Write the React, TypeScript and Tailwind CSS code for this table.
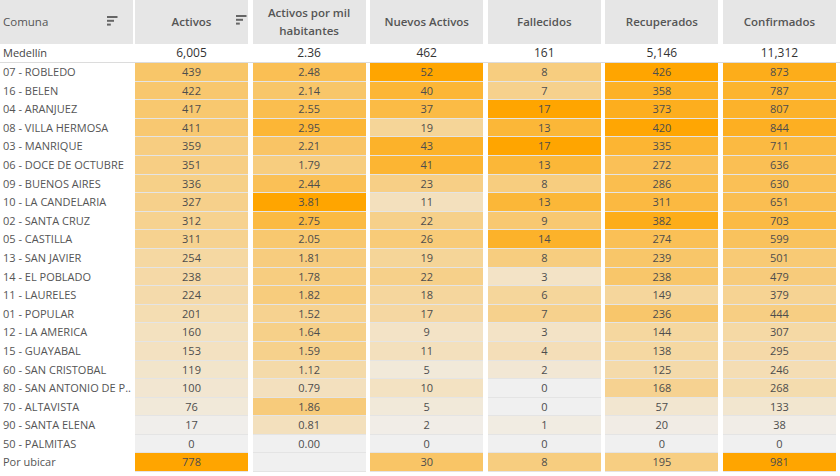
import React from 'react'

type Row = [string, number, number | null, number, number, number, number]

const rows: Row[] = [
  ['07 - ROBLEDO', 439, 2.48, 52, 8, 426, 873],
  ['16 - BELEN', 422, 2.14, 40, 7, 358, 787],
  ['04 - ARANJUEZ', 417, 2.55, 37, 17, 373, 807],
  ['08 - VILLA HERMOSA', 411, 2.95, 19, 13, 420, 844],
  ['03 - MANRIQUE', 359, 2.21, 43, 17, 335, 711],
  ['06 - DOCE DE OCTUBRE', 351, 1.79, 41, 13, 272, 636],
  ['09 - BUENOS AIRES', 336, 2.44, 23, 8, 286, 630],
  ['10 - LA CANDELARIA', 327, 3.81, 11, 13, 311, 651],
  ['02 - SANTA CRUZ', 312, 2.75, 22, 9, 382, 703],
  ['05 - CASTILLA', 311, 2.05, 26, 14, 274, 599],
  ['13 - SAN JAVIER', 254, 1.81, 19, 8, 239, 501],
  ['14 - EL POBLADO', 238, 1.78, 22, 3, 238, 479],
  ['11 - LAURELES', 224, 1.82, 18, 6, 149, 379],
  ['01 - POPULAR', 201, 1.52, 17, 7, 236, 444],
  ['12 - LA AMERICA', 160, 1.64, 9, 3, 144, 307],
  ['15 - GUAYABAL', 153, 1.59, 11, 4, 138, 295],
  ['60 - SAN CRISTOBAL', 119, 1.12, 5, 2, 125, 246],
  ['80 - SAN ANTONIO DE P..', 100, 0.79, 10, 0, 168, 268],
  ['70 - ALTAVISTA', 76, 1.86, 5, 0, 57, 133],
  ['90 - SANTA ELENA', 17, 0.81, 2, 1, 20, 38],
  ['50 - PALMITAS', 0, 0.0, 0, 0, 0, 0],
  ['Por ubicar', 778, null, 30, 8, 195, 981],
]

const totals = ['6,005', '2.36', '462', '161', '5,146', '11,312']

// max per column for the colour scale
const maxes = [1, 2, 3, 4, 5, 6].map((i) =>
  Math.max(...rows.map((r) => (r[i] as number | null) ?? 0))
)

function heat(v: number | null, max: number) {
  if (v == null) return '#f0f0f0'
  const t = Math.min(1, v / max)
  const from = [240, 240, 240]
  const to = [255, 165, 0]
  const c = from.map((f, i) => Math.round(f + (to[i] - f) * t))
  return `rgb(${c[0]}, ${c[1]}, ${c[2]})`
}

function fmt(v: number | null, i: number) {
  if (v == null) return ''
  if (i === 2) return v.toFixed(2)
  return v.toLocaleString('en-US')
}

function cn(...c: (string | false | undefined)[]) {
  return c.filter(Boolean).join(' ')
}

function SortIcon() {
  return (
    <svg width="11" height="10" viewBox="0 0 11 10" className="block">
      <rect x="0" y="0" width="10.5" height="2" fill="#666" />
      <rect x="0" y="3.8" width="7" height="2" fill="#666" />
      <rect x="0" y="7.6" width="3.8" height="2" fill="#666" />
    </svg>
  )
}

// column widths: label 133, gap 2, then six 113px columns with ~4.6px gaps
const labelCol = 'w-[133px] shrink-0'
function valCol(i: number) {
  return cn('w-[113px] shrink-0', i === 1 ? 'ml-[2px]' : 'ml-[4.6px]')
}

export default function App() {
  const headers = ['Activos', 'Activos por mil habitantes', 'Nuevos Activos', 'Fallecidos', 'Recuperados', 'Confirmados']

  return (
    <div className="w-[840px] h-[476px] bg-white overflow-hidden font-['Open_Sans',sans-serif]">
      {/* header */}
      <div className="flex h-[44px]">
        <div className={cn(labelCol, 'relative flex items-center bg-[#e6e6e6] pl-[3px] text-[11.5px] text-[#555]')}>
          Comuna
          <div className="absolute left-[107px] top-[16px]">
            <SortIcon />
          </div>
        </div>
        {headers.map((h, i) => (
          <div
            key={h}
            className={cn(
              valCol(i + 1),
              'relative flex items-center justify-center bg-[#e6e6e6] px-1 text-center text-[11.5px] font-semibold leading-[18px] text-[#555]'
            )}
          >
            {h === 'Activos por mil habitantes' ? (
              <span>
                Activos por mil
                <br />
                habitantes
              </span>
            ) : (
              <span className="whitespace-nowrap">{h}</span>
            )}
            {i === 0 && (
              <div className="absolute right-[1px] top-[15px]">
                <SortIcon />
              </div>
            )}
          </div>
        ))}
      </div>

      {/* total row */}
      <div className="flex h-[19px] border-b border-[#dcdcdc] text-[12px] leading-[18px] text-[#333]">
        <div className={cn(labelCol, 'pl-[3px] text-[11px] text-[#444]')}>Medellín</div>
        {totals.map((t, i) => (
          <div key={t} className={cn(valCol(i + 1), 'text-center')}>
            {t}
          </div>
        ))}
      </div>

      {/* data rows */}
      {rows.map((r) => (
        <div key={r[0]} className="flex h-[18.6px] text-[11px] leading-[17.6px]">
          <div className={cn(labelCol, 'pl-[3px] text-[#555] whitespace-nowrap')}>{r[0]}</div>
          {[1, 2, 3, 4, 5, 6].map((i) => (
            <div
              key={i}
              className={cn(valCol(i), 'border-b border-[#e4e4e4] text-center text-[#4d4d4d]')}
              style={{ backgroundColor: heat(r[i] as number | null, maxes[i - 1]) }}
            >
              {fmt(r[i] as number | null, i)}
            </div>
          ))}
        </div>
      ))}
    </div>
  )
}
